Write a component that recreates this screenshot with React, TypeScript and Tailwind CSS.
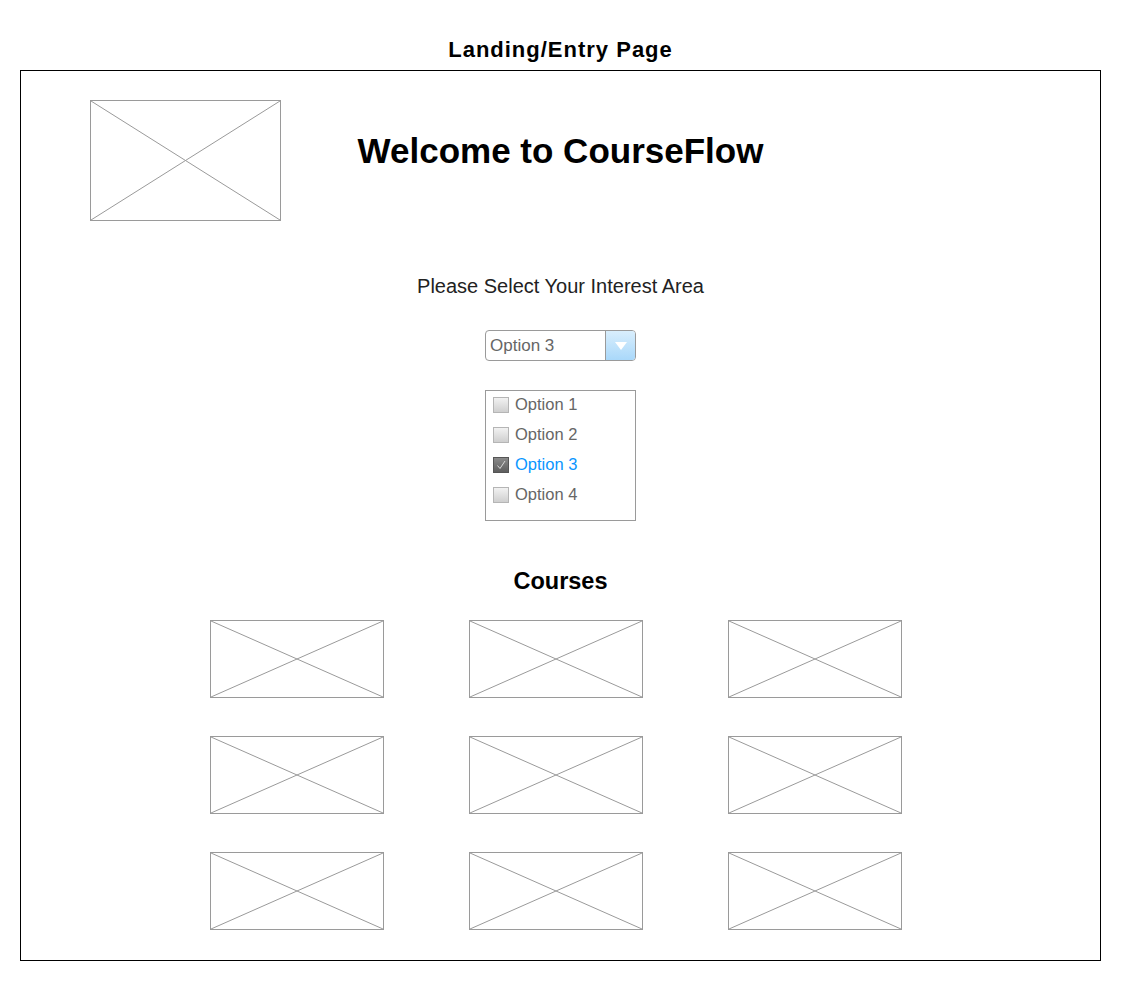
import React from "react";

function Placeholder({ className }: { className: string }) {
  return (
    <div className={`relative border border-[#9a9a9a] bg-white ${className}`}>
      <svg className="absolute inset-0 h-full w-full" preserveAspectRatio="none" viewBox="0 0 100 100">
        <line x1="0" y1="0" x2="100" y2="100" stroke="#9a9a9a" strokeWidth="1" vectorEffect="non-scaling-stroke" />
        <line x1="100" y1="0" x2="0" y2="100" stroke="#9a9a9a" strokeWidth="1" vectorEffect="non-scaling-stroke" />
      </svg>
    </div>
  );
}

function Checkbox({ checked }: { checked?: boolean }) {
  if (checked) {
    return (
      <span className="flex h-4 w-4 items-center justify-center border border-[#555] bg-gradient-to-b from-[#8a8a8a] to-[#5e5e5e]">
        <svg width="12" height="12" viewBox="0 0 12 12">
          <path d="M2.5 6.5 L5 9.5 L10 2" fill="none" stroke="#d8d8d8" strokeWidth="1" />
        </svg>
      </span>
    );
  }
  return <span className="h-4 w-4 border border-[#b5b5b5] bg-gradient-to-b from-[#f2f2f2] to-[#cfcfcf]" />;
}

const options = ["Option 1", "Option 2", "Option 3", "Option 4"];

export default function App() {
  return (
    <div className="min-h-[981px] bg-white font-['Liberation_Sans',Arial,sans-serif] text-black">
      <div className="pt-[37px] text-center text-[22px] font-bold leading-[26px] tracking-[1px]">Landing/Entry Page</div>
      <div className="ml-5 mt-[7px] h-[891px] w-[1081px] border border-black">
        <div className="grid pt-[29px]">
          <Placeholder className="col-start-1 row-start-1 ml-[69px] h-[121px] w-[191px] justify-self-start" />
          <h1 className="col-start-1 row-start-1 mt-[31px] text-center text-[35px] font-bold leading-10">
            Welcome to CourseFlow
          </h1>
        </div>

        <p className="mt-[53px] text-center text-[20px] leading-6 text-[#222]">Please Select Your Interest Area</p>

        <div className="mx-auto mt-[32px] flex h-[31px] w-[151px] overflow-hidden rounded-[4px] border border-[#9a9a9a]">
          <div className="flex flex-1 items-center pl-1 text-[17px] text-[#666]">Option 3</div>
          <div className="flex w-[30px] items-center justify-center border-l border-[#9a9a9a] bg-gradient-to-b from-[#d9eefc] to-[#a9d8fa]">
            <svg width="14" height="10" viewBox="0 0 14 10">
              <path d="M1 1 L13 1 L7 9 Z" fill="#ffffff" />
            </svg>
          </div>
        </div>

        <div className="mx-auto mt-[29px] h-[131px] w-[151px] border border-[#9a9a9a]">
          {options.map((o, i) => (
            <div key={o} className="flex h-[30px] items-center gap-[6px] pb-[3px] pl-[7px] text-[16.5px]">
              <Checkbox checked={i === 2} />
              <span className={i === 2 ? "text-[#0a96ff]" : "text-[#666]"}>{o}</span>
            </div>
          ))}
        </div>

        <h2 className="mt-[47px] text-center text-[23.5px] font-bold leading-[26px]">Courses</h2>

        <div className="ml-[189px] mt-[26px] grid w-[692px] grid-cols-[174px_174px_174px] gap-x-[85px] gap-y-[38px]">
          {Array.from({ length: 9 }).map((_, i) => (
            <Placeholder key={i} className="h-[78px] w-[174px]" />
          ))}
        </div>
      </div>
    </div>
  );
}
